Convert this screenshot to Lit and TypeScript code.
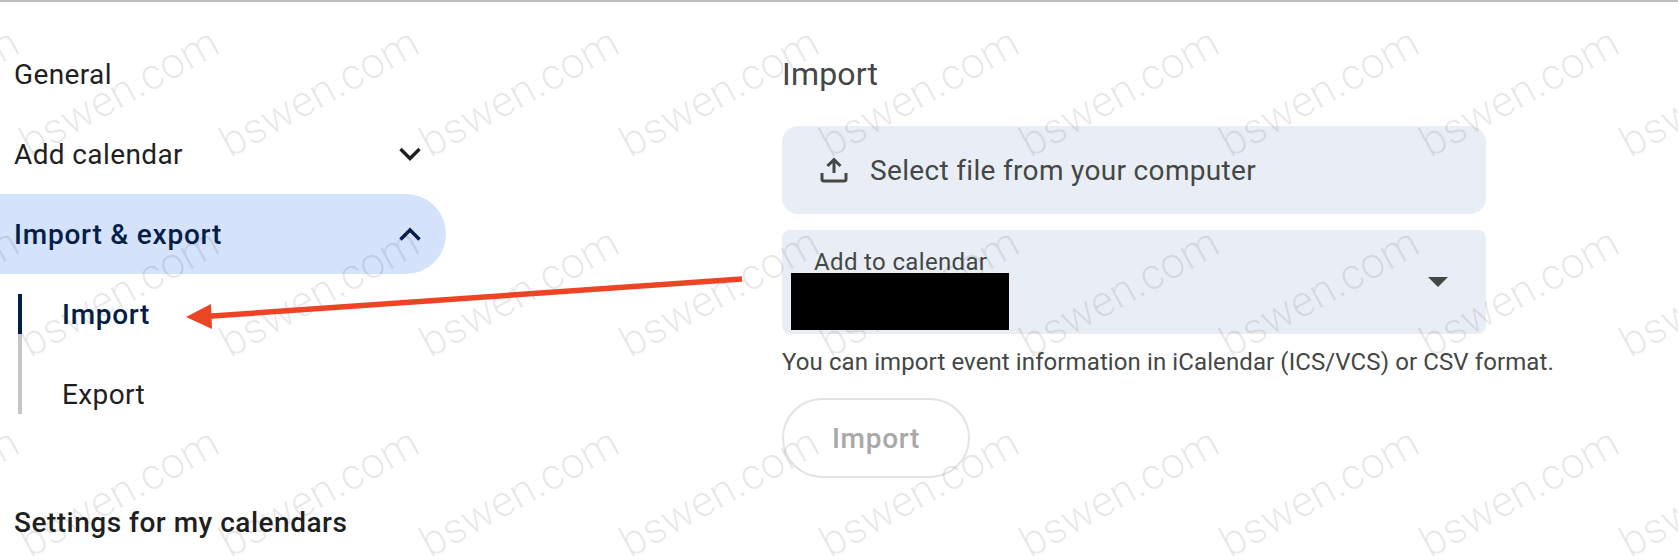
import { LitElement, html, css, svg } from "lit";
import { customElement } from "lit/decorators.js";

const chevron = (up: boolean) => html`<svg class="chev" width="24" height="16" viewBox="0 0 24 16">
  <path d=${up ? "M2.5 13.5 L12 4 L21.5 13.5" : "M2.5 3 L12 12.5 L21.5 3"} fill="none" stroke="currentColor" stroke-width="3.4"/></svg>`;

@customElement("app-root")
export class AppRoot extends LitElement {
  static styles = css`
    :host { display: block; position: relative; width: 1678px; height: 560px; overflow: hidden; background: #fff;
      font-family: Roboto, "Liberation Sans", sans-serif; color: #1f1f1f; }
    .page { display: flex; height: 560px; box-sizing: border-box; border-top: 2px solid #bdbdbd; padding-top: 32px; }
    .side { width: 446px; flex: none; font-size: 28px; letter-spacing: 0.38px; }
    .row { height: 80px; display: flex; align-items: center; justify-content: space-between; padding-left: 14px; padding-right: 24px; box-sizing: border-box; }
    .row.active { background: #d4e2fb; color: #041e49; border-radius: 0 40px 40px 0; font-weight: 500; letter-spacing: 0.78px; }
    .chev { display: block; }
    .sub { display: flex; padding-left: 18px; }
    .rail { width: 4px; margin-top: 20px; height: 120px; flex: none; background: #c4c7c5; }
    .rail div { height: 40px; background: #041e49; }
    .items { padding-left: 40px; }
    .item { height: 80px; display: flex; align-items: center; }
    .item.on { color: #041e49; font-weight: 500; letter-spacing: 0.7px; }
    .settings { margin-top: 48px; padding-left: 14px; height: 80px; display: flex; align-items: center; font-weight: 500; letter-spacing: 0.5px; color: #1f1f1f; }
    .main { margin-left: 336px; width: 704px; flex: none; color: #444746; }
    h1 { margin: 0; height: 80px; display: flex; align-items: center; font-size: 32px; font-weight: 400; letter-spacing: 0.2px; }
    .file { height: 88px; margin-top: 12px; background: #e9eef6; border-radius: 16px; display: flex; align-items: center; gap: 22px; padding-left: 38px; font-size: 28px; letter-spacing: 0.33px; }
    .select { height: 104px; margin-top: 16px; background: #e9eef6; border-radius: 8px; position: relative; display: flex; justify-content: flex-end; align-items: center; padding-right: 38px; }
    .select label { position: absolute; left: 32px; top: 16px; font-size: 24px; line-height: 32px; letter-spacing: 0.35px; }
    .redact { position: absolute; left: 9px; top: 43px; width: 218px; height: 57px; background: #000; z-index: 3; }
    .tri { width: 0; height: 0; border-left: 10px solid transparent; border-right: 10px solid transparent; border-top: 10px solid #444746; }
    .hint { margin: 4px 0 0; height: 48px; display: flex; align-items: center; font-size: 24px; white-space: nowrap; letter-spacing: 0.1px; }
    button { display: block; margin-top: 12px; width: 188px; height: 80px; box-sizing: border-box; background: transparent; border: 2px solid #e3e3e3; border-radius: 40px; font: 500 28px Roboto, sans-serif; letter-spacing: 0.7px; color: #a8a8a8; }
    .wm { position: absolute; left: -181px; top: -8px; display: grid; grid-template-columns: repeat(10, 200px); grid-auto-rows: 200px; pointer-events: none; }
    .wm span { display: flex; align-items: center; justify-content: center; transform: rotate(-29deg); font-size: 43.2px; font-weight: 300; color: rgba(0,0,0,.09); white-space: nowrap; }
    .arrow { position: absolute; left: 0; top: 0; z-index: 4; pointer-events: none; }
  `;

  render() {
    return html`
      <div class="page">
        <div class="side">
          <div class="row">General</div>
          <div class="row">Add calendar ${chevron(false)}</div>
          <div class="row active">Import &amp; export ${chevron(true)}</div>
          <div class="sub">
            <div class="rail"><div></div></div>
            <div class="items">
              <div class="item on">Import</div>
              <div class="item">Export</div>
            </div>
          </div>
          <div class="settings">Settings for my calendars</div>
        </div>
        <div class="main">
          <h1>Import</h1>
          <div class="file">
            <svg width="28" height="26" viewBox="0 0 28 26">
              <path d="M14 16 V3 M7.5 9 L14 2.5 L20.5 9 M2 16 V22 Q2 24 4 24 H24 Q26 24 26 22 V16" fill="none" stroke="#444746" stroke-width="3"/>
            </svg>
            Select file from your computer
          </div>
          <div class="select">
            <label>Add to calendar</label>
            <div class="redact"></div>
            <div class="tri"></div>
          </div>
          <p class="hint">You can import event information in iCalendar (ICS/VCS) or CSV format.</p>
          <button>Import</button>
        </div>
      </div>
      <div class="wm">${Array.from({ length: 30 }, () => html`<span>bswen.com</span>`)}</div>
      <svg class="arrow" width="1678" height="560" viewBox="0 0 1678 560">
        ${svg`<path d="M742 279 L205 316.5" stroke="#ee4426" stroke-width="5.5" fill="none"/>
        <path d="M186 317 L211 304 L212 329 Z" fill="#ee4426"/>`}
      </svg>
    `;
  }
}
